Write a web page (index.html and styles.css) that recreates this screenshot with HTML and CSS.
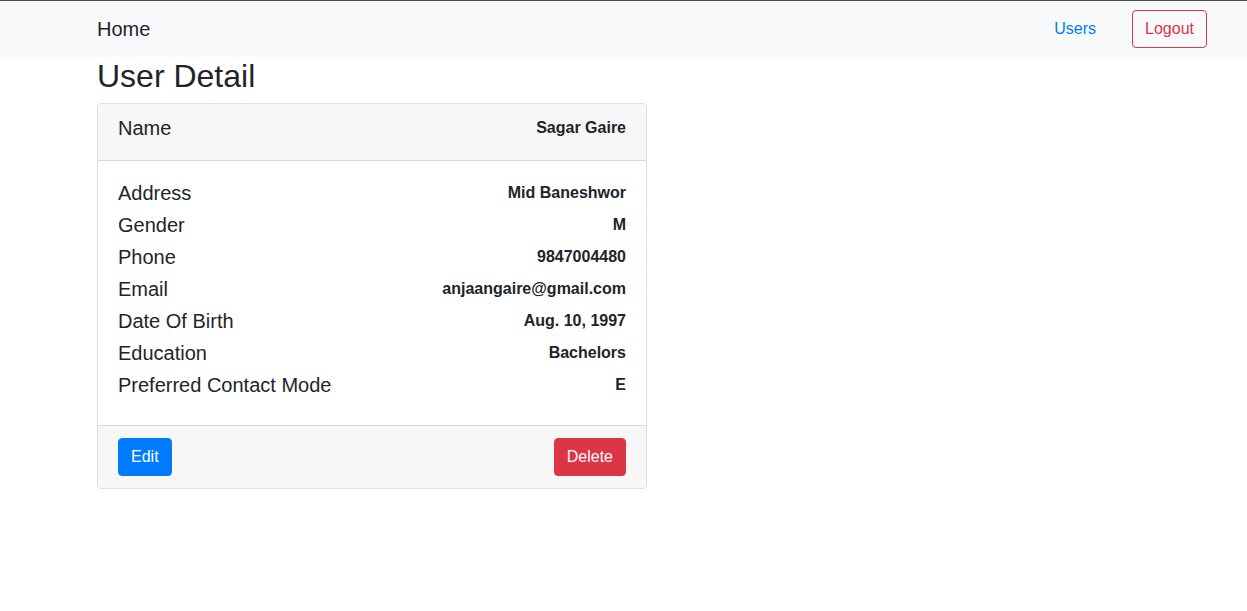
FILE: index.html
```html
<!DOCTYPE html>
<html lang="en">
<head>
<meta charset="utf-8">
<title>User Detail</title>
<link rel="stylesheet" href="styles.css">
</head>
<body>
<div class="topline"></div>
<nav class="navbar">
  <a class="brand" href="#">Home</a>
  <div class="nav-right">
    <a class="nav-link" href="#">Users</a>
    <a class="btn btn-outline-danger" href="#">Logout</a>
  </div>
</nav>
<main class="container">
  <h2 class="title">User Detail</h2>
  <div class="card">
    <div class="card-header">
      <div class="row"><span class="label">Name</span><span class="value">Sagar Gaire</span></div>
    </div>
    <div class="card-body">
      <div class="row"><span class="label">Address</span><span class="value">Mid Baneshwor</span></div>
      <div class="row"><span class="label">Gender</span><span class="value">M</span></div>
      <div class="row"><span class="label">Phone</span><span class="value">9847004480</span></div>
      <div class="row"><span class="label">Email</span><span class="value">anjaangaire@gmail.com</span></div>
      <div class="row"><span class="label">Date Of Birth</span><span class="value">Aug. 10, 1997</span></div>
      <div class="row"><span class="label">Education</span><span class="value">Bachelors</span></div>
      <div class="row"><span class="label">Preferred Contact Mode</span><span class="value">E</span></div>
    </div>
    <div class="card-footer">
      <a class="btn btn-primary" href="#">Edit</a>
      <a class="btn btn-danger" href="#">Delete</a>
    </div>
  </div>
</main>
</body>
</html>
```
FILE: styles.css
```css
* { box-sizing: border-box; }
body {
  margin: 0;
  font-family: "Liberation Sans", Arial, sans-serif;
  font-size: 16px;
  line-height: 1.5;
  color: #212529;
  background: #fff;
}
a { text-decoration: none; }
.topline { height: 1px; background: #505050; }
.navbar {
  height: 56px;
  background: #f8f9fa;
  display: flex;
  align-items: center;
  justify-content: space-between;
  padding: 0 40px 0 97px;
}
.brand {
  font-size: 20px;
  color: #212529;
  line-height: 1.5;
}
.nav-right { display: flex; align-items: center; }
.nav-link {
  color: #007bff;
  padding: 8px;
  margin-right: 28px;
}
.btn {
  display: inline-block;
  font-size: 16px;
  line-height: 1.5;
  padding: 6px 12px;
  border: 1px solid transparent;
  border-radius: 4px;
}
.btn-outline-danger { color: #dc3545; border-color: #dc3545; }
.btn-primary { color: #fff; background: #007bff; border-color: #007bff; }
.btn-danger { color: #fff; background: #dc3545; border-color: #dc3545; }
.container { padding-left: 97px; }
.title {
  margin: 0 0 8px;
  font-size: 32px;
  line-height: 1.2;
  font-weight: normal;
}
.card {
  width: 550px;
  border: 1px solid rgba(0,0,0,.125);
  border-radius: 4px;
  overflow: hidden;
}
.card-header {
  background: #f7f7f7;
  padding: 12px 20px;
  border-bottom: 1px solid rgba(0,0,0,.125);
}
.card-body { padding: 20px; }
.row {
  display: flex;
  justify-content: space-between;
  align-items: center;
  height: 24px;
  margin-bottom: 8px;
}
.label { font-size: 20px; line-height: 1.2; }
.value { font-size: 16px; font-weight: bold; line-height: 1.2; margin-bottom: 2px; }
.card-footer {
  background: #f7f7f7;
  padding: 12px 20px;
  border-top: 1px solid rgba(0,0,0,.125);
  display: flex;
  justify-content: space-between;
}
```
